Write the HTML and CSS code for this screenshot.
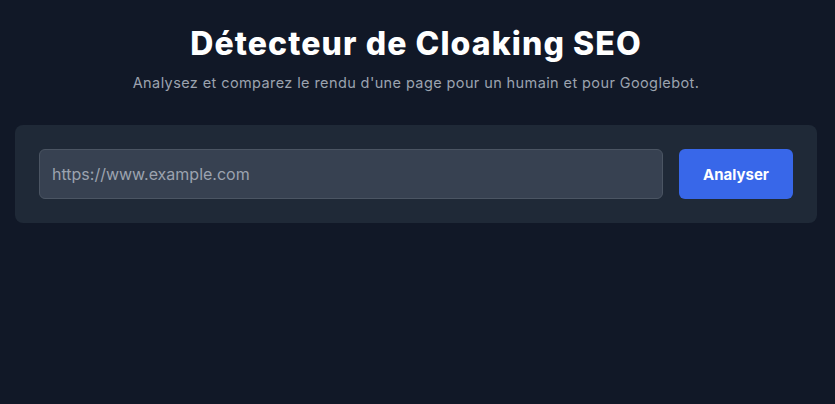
FILE: index.html
```html
<!DOCTYPE html>
<html lang="fr">
<head>
<meta charset="utf-8">
<title>Détecteur de Cloaking SEO</title>
<link rel="stylesheet" href="styles.css">
</head>
<body>
<main class="page">
  <header class="header">
    <h1 class="title">Détecteur de Cloaking SEO</h1>
    <p class="subtitle">Analysez et comparez le rendu d'une page pour un humain et pour Googlebot.</p>
  </header>
  <form class="card" onsubmit="return false">
    <input class="url-input" type="text" placeholder="https://www.example.com">
    <button class="btn" type="submit">Analyser</button>
  </form>
</main>
</body>
</html>
```
FILE: styles.css
```css
* { box-sizing: border-box; }
html, body { margin: 0; padding: 0; }
body {
  background: #111827;
  color: #f9fafb;
  font-family: Inter, "Noto Sans", sans-serif;
  min-height: 100vh;
}
.page {
  padding: 24px 18px 20px 15px;
}
.header {
  text-align: center;
  margin-bottom: 32px;
}
.title {
  margin: 0;
  font-size: 32px;
  line-height: 40px;
  font-weight: 800;
  color: #ffffff;
  letter-spacing: 1.1px;
}
.subtitle {
  margin: 9px 0 0;
  font-size: 14.5px;
  line-height: 20px;
  color: #9ca3af;
  letter-spacing: 0.4px;
}
.card {
  background: #1f2937;
  border-radius: 8px;
  padding: 24px;
  display: flex;
  gap: 16px;
}
.url-input {
  flex: 1;
  height: 50px;
  background: #374151;
  border: 1px solid #4b5563;
  border-radius: 6px;
  padding: 0 12px;
  font-family: inherit;
  font-size: 16px;
  color: #f9fafb;
  outline: none;
}
.url-input::placeholder { color: #9ca3af; }
.btn {
  width: 114px;
  height: 50px;
  background: #3867e9;
  border: none;
  border-radius: 6px;
  color: #ffffff;
  font-family: inherit;
  font-size: 15px;
  font-weight: 700;
}
```
